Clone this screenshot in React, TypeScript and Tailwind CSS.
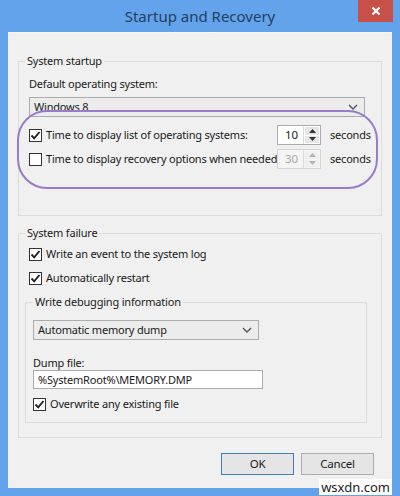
import React from "react";

const font = { fontFamily: '"Noto Sans", "Open Sans", sans-serif' };

function CheckBox({ checked }: { checked?: boolean }) {
  return (
    <span className="flex h-[13px] w-[13px] shrink-0 items-center justify-center border border-[#333333] bg-white">
      {checked && (
        <svg width="11" height="11" viewBox="0 0 11 11">
          <path d="M1.5 5.5 L4.2 8.3 L9.5 2" fill="none" stroke="#222" strokeWidth="1.9" />
        </svg>
      )}
    </span>
  );
}

function CheckRow({ checked, label }: { checked?: boolean; label: string }) {
  return (
    <div className="flex h-[16px] items-center gap-[4px] text-[11px] leading-[16px] text-[#1a1a1a]">
      <CheckBox checked={checked} />
      <span className="whitespace-nowrap">{label}</span>
    </div>
  );
}

function Chevron() {
  return (
    <svg width="10" height="6" viewBox="0 0 10 6">
      <path d="M1 1 L5 5 L9 1" fill="none" stroke="#555" strokeWidth="1.4" />
    </svg>
  );
}

function Spinner({ value, disabled }: { value: string; disabled?: boolean }) {
  const arrow = disabled ? "#b5b5b5" : "#333";
  return (
    <div
      className={`flex h-[20px] w-[44px] shrink-0 border ${
        disabled ? "border-[#d5d5d5] bg-[#f4f4f4] text-[#a8a8a8]" : "border-[#acacac] bg-white text-[#1a1a1a]"
      }`}
    >
      <span className="flex-1 pl-[7px] text-[11.5px] leading-[18px]">{value}</span>
      <div className="flex w-[17px] flex-col gap-px border-l border-[#dadada] p-px">
        <div className={`flex flex-1 items-center justify-center ${disabled ? "bg-[#f0f0f0]" : "bg-[#e6e6e6]"}`}>
          <svg width="7" height="4" viewBox="0 0 7 4">
            <path d="M0 4 L3.5 0 L7 4 Z" fill={arrow} />
          </svg>
        </div>
        <div className={`flex flex-1 items-center justify-center ${disabled ? "bg-[#f0f0f0]" : "bg-[#e6e6e6]"}`}>
          <svg width="7" height="4" viewBox="0 0 7 4">
            <path d="M0 0 L3.5 4 L7 0 Z" fill={arrow} />
          </svg>
        </div>
      </div>
    </div>
  );
}

function TimeRow({ checked, label, value, disabled }: { checked?: boolean; label: string; value: string; disabled?: boolean }) {
  return (
    <div className="flex h-[20px] items-center">
      <div className="w-[248px] shrink-0">
        <CheckRow checked={checked} label={label} />
      </div>
      <Spinner value={value} disabled={disabled} />
      <span className="ml-[9px] whitespace-nowrap text-[11px] leading-[16px] text-[#1a1a1a]">seconds</span>
    </div>
  );
}

export default function App() {
  return (
    <div style={font} className="relative flex h-[496px] w-[400px] flex-col overflow-hidden bg-[#62a3ec] tracking-[-0.2px]">
      {/* title bar */}
      <div className="flex h-[32px] shrink-0 items-center justify-center">
        <span className="text-[15px] leading-[20px] tracking-normal text-[#22415f]">Startup and Recovery</span>
      </div>
      <div className="absolute right-[7px] top-0 flex h-[22px] w-[35px] items-center justify-center bg-[#c75049]">
        <svg width="10" height="10" viewBox="0 0 10 10">
          <path d="M1.5 1.5 L8.5 8.5 M8.5 1.5 L1.5 8.5" stroke="white" strokeWidth="2.2" />
        </svg>
      </div>

      {/* client area */}
      <div className="mx-[8px] mb-[8px] flex flex-1 flex-col border-t border-[#f8f8f8] bg-[#f0f0f0] px-[10px] pt-[20px]">
        {/* System startup */}
        <fieldset className="h-[163px] border border-[#dcdcdc] pl-[10px] pr-[10px]">
          <legend className="ml-[-4px] px-[2px] text-[11px] leading-[16px] text-[#1a1a1a]">System startup</legend>
          <div className="mt-[7px] text-[11px] leading-[16px] text-[#1a1a1a]">Default operating system:</div>
          <div className="mt-[5px] flex h-[20px] w-[336px] items-center justify-between border border-[#acacac] bg-[#ececec] pl-[4px] pr-[6px]">
            <span className="text-[11px] leading-[16px] text-[#1a1a1a]">Windows 8</span>
            <Chevron />
          </div>
          <div className="mt-[8px]">
            <TimeRow checked label="Time to display list of operating systems:" value="10" />
          </div>
          <div className="mt-[4px]">
            <TimeRow label="Time to display recovery options when needed" value="30" disabled />
          </div>
        </fieldset>

        {/* System failure */}
        <fieldset className="mt-[9px] h-[213px] border border-[#dcdcdc] pl-[6px] pr-[14px]">
          <legend className="ml-[0px] px-[2px] text-[11px] leading-[16px] text-[#1a1a1a]">System failure</legend>
          <div className="ml-[4px] mt-[5px]">
            <CheckRow checked label="Write an event to the system log" />
          </div>
          <div className="ml-[4px] mt-[8px]">
            <CheckRow checked label="Automatically restart" />
          </div>
          <fieldset className="mt-[8px] h-[129px] w-[342px] border border-[#dcdcdc] pl-[7px]">
            <legend className="px-[2px] text-[11px] leading-[16px] text-[#1a1a1a]">Write debugging information</legend>
            <div className="mt-[10px] flex h-[20px] w-[226px] items-center justify-between border border-[#acacac] bg-[#ececec] pl-[4px] pr-[6px]">
              <span className="text-[11px] leading-[16px] text-[#1a1a1a]">Automatic memory dump</span>
              <Chevron />
            </div>
            <div className="mt-[16px] text-[11px] leading-[14px] text-[#1a1a1a]">Dump file:</div>
            <div className="flex h-[19px] w-[230px] items-center border border-[#acacac] bg-white pl-[4px] text-[11px] leading-[16px] text-[#1a1a1a]">
              %SystemRoot%\MEMORY.DMP
            </div>
            <div className="mt-[7px]">
              <CheckRow checked label="Overwrite any existing file" />
            </div>
          </fieldset>
        </fieldset>

        {/* buttons */}
        <div className="mr-[8px] mt-[15px] flex justify-end gap-[7px]">
          <button className="h-[22px] w-[73px] border border-[#3c7fb1] bg-[#e5e5e5] text-[11.5px] text-[#1a1a1a]">OK</button>
          <button className="h-[22px] w-[73px] border border-[#acacac] bg-[#e5e5e5] text-[11.5px] text-[#1a1a1a]">Cancel</button>
        </div>
      </div>

      {/* highlight ring */}
      <div className="pointer-events-none absolute left-[17px] top-[110px] h-[79px] w-[361px] rounded-[30px] border-2 border-[#9a7acb]" />

      {/* watermark */}
      <div className="absolute bottom-[1px] right-[8px] bg-white px-[2px] text-[13px] leading-[16px] tracking-normal text-[#222]">wsxdn.com</div>
    </div>
  );
}
